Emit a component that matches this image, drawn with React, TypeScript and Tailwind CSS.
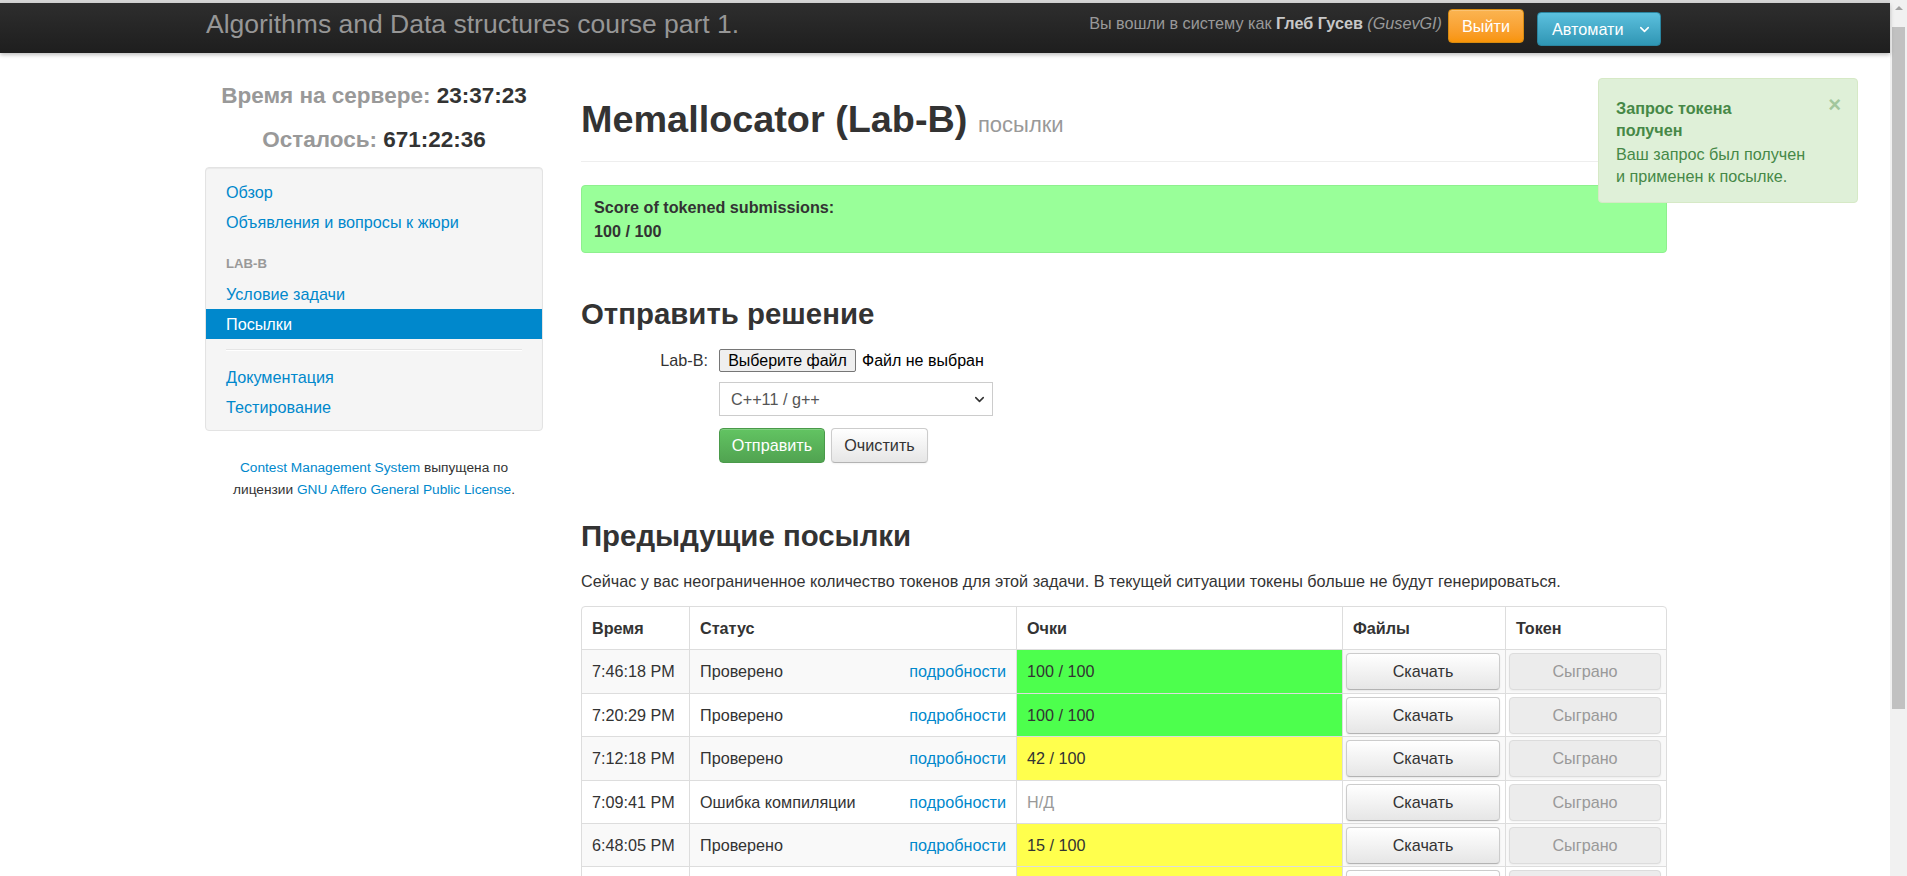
import { ChevronDown } from "lucide-react";

// ── data ──────────────────────────────────────────────────────────────────────

type Tone = "green" | "yellow" | "none";

type Submission = {
  time: string;
  status: string;
  score: string;
  tone: Tone;
  h: string;
};

const submissions: Submission[] = [
  { time: "7:46:18 PM", status: "Проверено", score: "100 / 100", tone: "green", h: "h-[44px]" },
  { time: "7:20:29 PM", status: "Проверено", score: "100 / 100", tone: "green", h: "h-[43px]" },
  { time: "7:12:18 PM", status: "Проверено", score: "42 / 100", tone: "yellow", h: "h-[44px]" },
  { time: "7:09:41 PM", status: "Ошибка компиляции", score: "Н/Д", tone: "none", h: "h-[43px]" },
  { time: "6:48:05 PM", status: "Проверено", score: "15 / 100", tone: "yellow", h: "h-[43px]" },
  { time: "6:31:52 PM", status: "Проверено", score: "15 / 100", tone: "yellow", h: "h-[44px]" },
];

const scoreBg: Record<Tone, string> = {
  green: "bg-[#4dff4d]",
  yellow: "bg-[#ffff4d]",
  none: "",
};

// ── navbar ────────────────────────────────────────────────────────────────────

function Navbar() {
  return (
    <>
      <div className="h-[3px] bg-[#d6d6d6]" />
      <div className="relative z-10 h-[50px] bg-linear-to-b from-[#2e2e2e] to-[#1e1e1e] shadow-[0_2px_4px_rgba(0,0,0,0.25)]">
        <div className="ml-[206px] flex w-[1455px] items-start">
          <div className="mt-[4px] text-[26.5px] leading-[34px] text-[#969696]">
            Algorithms and Data structures course part 1.
          </div>
          <div className="ml-auto mt-[8px] text-[16.2px] leading-[24px] text-[#999]">
            Вы вошли в систему как <b className="text-[#c8c8c8]">Глеб Гусев</b>{" "}
            <i>(GusevGI)</i>
          </div>
          <button
            type="button"
            className="ml-[6px] mt-[6px] h-[34px] w-[76px] rounded-[4px] border border-[#d78a0f] bg-linear-to-b from-[#fbb450] to-[#f89406] text-[16.2px] text-white shadow-[inset_0_1px_0_rgba(255,255,255,0.2)]"
          >
            Выйти
          </button>
          <div className="ml-[13px] mt-[9px] flex h-[34px] w-[124px] items-center rounded-[4px] border border-[#2a85a0] bg-linear-to-b from-[#5bc0de] to-[#2f96b4] pl-[14px] pr-[8px] text-[16.2px] text-white">
            <span>Автомати</span>
            <ChevronDown className="ml-auto" size={15} strokeWidth={2.5} />
          </div>
        </div>
      </div>
    </>
  );
}

// ── sidebar ───────────────────────────────────────────────────────────────────

function NavItem({ label, active }: { label: string; active?: boolean }) {
  return (
    <div
      className={
        active
          ? "h-[30px] bg-[#0088cc] px-[20px] leading-[30px] text-white"
          : "h-[30px] px-[20px] leading-[30px] text-[#0088cc]"
      }
    >
      {label}
    </div>
  );
}

function Sidebar() {
  return (
    <aside className="w-[338px] shrink-0">
      <div className="mt-[21px] text-center text-[22.5px] font-bold leading-[44px]">
        <div>
          <span className="text-[#999]">Время на сервере:</span>{" "}
          <span className="text-[#333]">23:37:23</span>
        </div>
        <div>
          <span className="text-[#999]">Осталось:</span>{" "}
          <span className="text-[#333]">671:22:36</span>
        </div>
      </div>

      <div className="mt-[5px] rounded-[4px] border border-[#e3e3e3] bg-[#f5f5f5] pb-[8px] pt-[9px] text-[16.2px] shadow-[inset_0_1px_1px_rgba(0,0,0,0.05)]">
        <NavItem label="Обзор" />
        <NavItem label="Объявления и вопросы к жюри" />
        <div className="mt-[12px] h-[30px] px-[20px] text-[13.2px] font-bold uppercase leading-[30px] text-[#999]">
          Lab-B
        </div>
        <NavItem label="Условие задачи" />
        <NavItem label="Посылки" active />
        <div className="mx-[20px] mb-[11px] mt-[10px] h-[2px] border-b border-white bg-[#e5e5e5]" />
        <NavItem label="Документация" />
        <NavItem label="Тестирование" />
      </div>

      <p className="mt-[26px] text-center text-[13.7px] leading-[22px] text-[#333]">
        <span className="text-[#0088cc]">Contest Management System</span> выпущена по
        <br />
        лицензии <span className="text-[#0088cc]">GNU Affero General Public License</span>.
      </p>
    </aside>
  );
}

// ── main ──────────────────────────────────────────────────────────────────────

function SubmitForm() {
  return (
    <div className="mt-[17px] flex text-[16.2px]">
      <div className="h-[23px] w-[127px] text-right leading-[23px] text-[#333]">Lab-B:</div>
      <div className="ml-[11px] flex flex-col">
        <div className="flex h-[23px] items-center">
          <div className="flex h-[23px] w-[137px] items-center justify-center rounded-[2px] border border-[#767676] bg-[#efefef] text-[16px] text-black">
            Выберите файл
          </div>
          <span className="ml-[6px] text-[16px] text-black">Файл не выбран</span>
        </div>
        <div className="mt-[10px] flex h-[34px] w-[274px] items-center border border-[#ccc] bg-white pl-[11px] pr-[5px] text-[#555]">
          <span>C++11 / g++</span>
          <ChevronDown className="ml-auto text-[#333]" size={15} strokeWidth={2.5} />
        </div>
        <div className="mt-[12px] flex gap-[6px]">
          <button
            type="button"
            className="h-[35px] w-[106px] rounded-[4px] border border-[#4a9a4a] bg-linear-to-b from-[#62c462] to-[#51a351] text-white shadow-[inset_0_1px_0_rgba(255,255,255,0.2)]"
          >
            Отправить
          </button>
          <button
            type="button"
            className="h-[35px] w-[97px] rounded-[4px] border border-[#ccc] border-b-[#b3b3b3] bg-linear-to-b from-white to-[#e6e6e6] text-[#333] shadow-[0_1px_2px_rgba(0,0,0,0.05)]"
          >
            Очистить
          </button>
        </div>
      </div>
    </div>
  );
}

function SubmissionsTable() {
  return (
    <div className="mt-[13px] overflow-hidden rounded-[4px] border border-[#ddd] text-[16.2px] text-[#333]">
      {/* header */}
      <div className="flex h-[42px] items-center font-bold">
        <div className="w-[107px] pl-[10px]">Время</div>
        <div className="flex h-full w-[327px] items-center border-l border-[#ddd] pl-[10px]">Статус</div>
        <div className="flex h-full w-[326px] items-center border-l border-[#ddd] pl-[10px]">Очки</div>
        <div className="flex h-full w-[163px] items-center border-l border-[#ddd] pl-[10px]">Файлы</div>
        <div className="flex h-full w-[161px] items-center border-l border-[#ddd] pl-[10px]">Токен</div>
      </div>
      {submissions.map((s, i) => (
        <div
          key={s.time}
          className={`flex ${s.h} border-t border-[#ddd] ${i % 2 === 0 ? "bg-[#f9f9f9]" : "bg-white"}`}
        >
          <div className="flex w-[107px] items-center pl-[10px]">{s.time}</div>
          <div className="flex w-[327px] items-center border-l border-[#ddd] px-[10px]">
            <span>{s.status}</span>
            <span className="ml-auto text-[#0088cc]">подробности</span>
          </div>
          <div
            className={`flex w-[326px] items-center border-l border-[#ddd] pl-[10px] ${scoreBg[s.tone]} ${
              s.tone === "none" ? "text-[#999]" : "text-[#333]"
            }`}
          >
            {s.score}
          </div>
          <div className="flex w-[163px] items-center border-l border-[#ddd] pl-[3px] pr-[5px]">
            <div className="flex h-[37px] w-full items-center justify-center rounded-[4px] border border-[#ccc] border-b-[#b3b3b3] bg-linear-to-b from-white to-[#e6e6e6] text-[#333] shadow-[0_1px_2px_rgba(0,0,0,0.08)]">
              Скачать
            </div>
          </div>
          <div className="flex w-[161px] items-center border-l border-[#ddd] pl-[3px] pr-[5px]">
            <div className="flex h-[37px] w-full items-center justify-center rounded-[4px] border border-[#dcdcdc] bg-[#ececec] text-[#999] shadow-[0_1px_2px_rgba(0,0,0,0.05)]">
              Сыграно
            </div>
          </div>
        </div>
      ))}
    </div>
  );
}

function Main() {
  return (
    <main className="ml-[38px] w-[1086px] shrink-0 text-[#333]">
      <div className="mt-[46px] border-b border-[#eee] pb-[16px]">
        <h1 className="text-[37.8px] font-bold leading-[40px]">
          Memallocator (Lab-B){" "}
          <small className="text-[22px] font-normal text-[#999]">посылки</small>
        </h1>
      </div>

      <div className="mt-[23px] rounded-[4px] border border-[#8ef08e] bg-[#99ff99] px-[12px] py-[9px] text-[16.2px] font-bold leading-[24px]">
        <div>Score of tokened submissions:</div>
        <div>100 / 100</div>
      </div>

      <h2 className="mt-[43px] text-[29.4px] font-bold leading-[36px]">Отправить решение</h2>
      <SubmitForm />

      <h2 className="mt-[55px] text-[29.4px] font-bold leading-[36px]">Предыдущие посылки</h2>
      <p className="mt-[15px] text-[16.2px] leading-[24px]">
        Сейчас у вас неограниченное количество токенов для этой задачи. В текущей ситуации токены
        больше не будут генерироваться.
      </p>
      <SubmissionsTable />
    </main>
  );
}

// ── notification + scrollbar ──────────────────────────────────────────────────

function Toast() {
  return (
    <div className="absolute left-[1598px] top-[78px] w-[260px] rounded-[4px] border border-[#d6e9c6] bg-[#dff0d8] pb-[15px] pl-[17px] pr-[14px] pt-[18px] text-[16.2px] leading-[22px] text-[#468847]">
      <span className="absolute right-[16px] top-[11px] text-[22px] font-bold leading-[30px] text-[#468847] opacity-40">
        ×
      </span>
      <div className="mb-[2px] font-bold">
        Запрос токена
        <br />
        получен
      </div>
      <div>
        Ваш запрос был получен
        <br />и применен к посылке.
      </div>
    </div>
  );
}

function Scrollbar() {
  return (
    <div className="flex w-[17px] shrink-0 flex-col items-center bg-[#f1f1f1]">
      <div className="mt-[6px] h-0 w-0 border-x-[4px] border-b-[4px] border-x-transparent border-b-[#a3a3a3]" />
      <div className="mt-[17px] h-[682px] w-[13px] bg-[#c1c1c1]" />
    </div>
  );
}

export default function App() {
  return (
    <div className="flex h-[876px] w-full overflow-hidden bg-white font-['Liberation_Sans',Arial,sans-serif]">
      <div className="relative min-w-0 flex-1">
        <Navbar />
        <div className="ml-[205px] flex">
          <Sidebar />
          <Main />
        </div>
        <Toast />
      </div>
      <Scrollbar />
    </div>
  );
}
